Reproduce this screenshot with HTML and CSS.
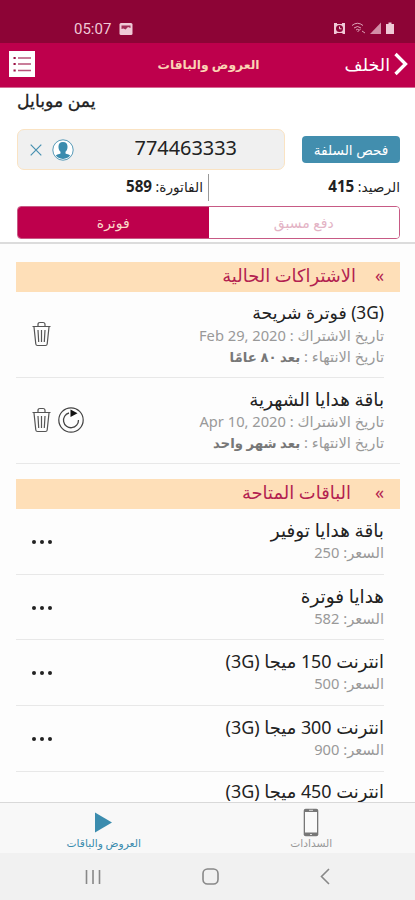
FILE: index.html
```html
<!DOCTYPE html>
<html lang="ar" dir="rtl">
<head>
  <meta charset="UTF-8">
  <meta name="viewport" content="width=device-width, initial-scale=1.0">
  <title>العروض والباقات</title>
  <link rel="stylesheet" href="styles.css">
</head>
<body>
  <div class="status-bar" dir="ltr">
    <span class="clock">05:07</span>
    <svg class="status-photo" width="14" height="12" viewBox="0 0 14 12"><rect x="0.5" width="13" height="12" rx="1.5" fill="#f0c9d6"/><path d="M2.500 6V2.500h9V5L9 4 6.500 6.500l-2-1z" fill="#8d0436" opacity="0.800"/></svg>
    <svg class="status-icons" width="62" height="13" viewBox="0 0 62 13">
      <g fill="#f0c9d6">
        <path d="M1 1h3v1h5V1h3v11h-2l-1-1H4l-1 1H1z"/>
        <path d="M48 0.500V12H37z" opacity="0.700"/>
        <path d="M54 2h1.500V0.500h3V2H61v10h-8V2z"/>
      </g>
      <circle cx="6.500" cy="6.500" r="3.500" fill="#8d0436"/>
      <path d="M6.500 4.500v2.300h2" fill="none" stroke="#f0c9d6"/>
      <path d="M19 3.500q5.500-4.500 11 0M21 6q3.500-3 7 0M23 8q1.500-1.500 3 0M24.500 10l3-3M29 9l3 2" fill="none" stroke="#f0c9d6" opacity="0.800"/>
    </svg>
  </div>

  <header class="header">
    <a class="back">
      <svg width="14" height="24" viewBox="0 0 14 24"><path d="M1.500 2l10 10-10 10" fill="none" stroke="#fff" stroke-width="3.300"/></svg>
      <span>الخلف</span>
    </a>
    <h1>العروض والباقات</h1>
    <svg class="menu" width="26" height="26" viewBox="0 0 26 26"><rect width="26" height="26" fill="#fff"/><path d="M9 7h13M9 13h13M9 19.500h13" stroke="#b8547a" stroke-width="1.300"/><path d="M4.500 7h2.200M4.500 13h2.200M4.500 19.500h2.200" stroke="#9c1145" stroke-width="2"/></svg>
  </header>

  <section class="account">
    <h2>يمن موبايل</h2>
    <div class="number-row">
      <button class="check-btn">فحص السلفة</button>
      <div class="number-box">
        <span class="number">774463333</span>
        <svg width="22" height="22" viewBox="0 0 22 22"><circle cx="11" cy="11" r="10.200" fill="#fff" stroke="#4690b0" stroke-width="0.900"/><path d="M11 3c3.300 0 4.700 2.300 4.500 5.300-.1 2-.9 3.500-2 4.500v1.800c1.500.6 3.300.8 4.700 2A9.500 9.500 0 0 1 3.800 16.600c1.400-1.200 3.200-1.400 4.700-2v-1.800c-1.100-1-1.900-2.500-2-4.500C6.300 5.300 7.700 3 11 3z" fill="#3b8cae"/></svg>
        <svg width="12" height="12" viewBox="0 0 12 12"><path d="M.7.7l10.600 10.600M11.300.7L.7 11.300" stroke="#4690b0" stroke-width="1.200"/></svg>
      </div>
    </div>
    <div class="balances">
      <p>الرصيد: <b>415</b></p>
      <p>الفاتورة: <b>589</b></p>
    </div>
    <div class="segments">
      <button>دفع مسبق</button>
      <button class="active">فوترة</button>
    </div>
  </section>

  <main class="content">
    <h3 class="section-title"><span class="arrows">»</span><span>الاشتراكات الحالية</span></h3>
    <article class="row subscription">
      <div>
        <h4 class="sim">(3G) فوترة شريحة</h4>
        <p>تاريخ الاشتراك : <bdi>Feb 29, 2020</bdi></p>
        <p>تاريخ الانتهاء : <b>بعد ٨٠ عامًا</b></p>
      </div>
      <div class="actions">
        <svg width="19" height="26" viewBox="0 0 19 26"><path d="M.5 5.500h18M2 6l1.800 17q.2 1.500 1.700 1.500h8q1.500 0 1.700-1.500L17 6M6 5V3.500q0-2 2-2h3q2 0 2 2V5M6 9l.7 12M9.500 9v12M13 9l-.7 12" fill="none" stroke="#555" stroke-width="1.200"/></svg>
      </div>
    </article>
    <article class="row subscription last">
      <div>
        <h4>باقة هدايا الشهرية</h4>
        <p>تاريخ الاشتراك : <bdi>Apr 10, 2020</bdi></p>
        <p>تاريخ الانتهاء : <b>بعد شهر واحد</b></p>
      </div>
      <div class="actions">
        <svg width="26" height="26" viewBox="0 0 26 26"><circle cx="13" cy="13" r="12.200" fill="none" stroke="#444" stroke-width="1.200"/><path d="M11 6A7.500 7.500 0 1 0 20.500 13" fill="none" stroke="#444" stroke-width="1.300"/><path d="M12.500 2.500v7.500l7-3.700z" fill="#111"/></svg>
        <svg width="19" height="26" viewBox="0 0 19 26"><path d="M.5 5.500h18M2 6l1.800 17q.2 1.500 1.700 1.500h8q1.500 0 1.700-1.500L17 6M6 5V3.500q0-2 2-2h3q2 0 2 2V5M6 9l.7 12M9.500 9v12M13 9l-.7 12" fill="none" stroke="#555" stroke-width="1.200"/></svg>
      </div>
    </article>

    <h3 class="section-title available"><span class="arrows">»</span><span>الباقات المتاحة</span></h3>
    <article class="row">
      <div><h4>باقة هدايا توفير</h4><p>السعر: 250</p></div>
      <div class="dots"><i></i><i></i><i></i></div>
    </article>
    <article class="row">
      <div><h4>هدايا فوترة</h4><p>السعر: 582</p></div>
      <div class="dots"><i></i><i></i><i></i></div>
    </article>
    <article class="row">
      <div><h4 class="net">انترنت 150 ميجا (3G)</h4><p>السعر: 500</p></div>
      <div class="dots"><i></i><i></i><i></i></div>
    </article>
    <article class="row">
      <div><h4 class="net">انترنت 300 ميجا (3G)</h4><p>السعر: 900</p></div>
      <div class="dots"><i></i><i></i><i></i></div>
    </article>
    <article class="row partial">
      <div><h4 class="net">انترنت 450 ميجا (3G)</h4></div>
    </article>
  </main>

  <nav class="tabs">
    <a>
      <svg width="16" height="29" viewBox="0 0 16 29"><rect x=".7" y=".7" width="14.600" height="27.600" rx="2" fill="#777"/><path d="M2 4h12v20.500H2z" fill="#fafafa"/><path d="M6 2.300h4M7 26.500h2" stroke="#ddd"/></svg>
      <span>السدادات</span>
    </a>
    <a class="active">
      <svg width="17" height="29" viewBox="0 0 17 29"><path d="M0 4.500l17 10-17 10z" fill="#3b8cae"/></svg>
      <span>العروض والباقات</span>
    </a>
  </nav>
  <div class="system-nav" dir="ltr">
    <svg width="16" height="16" viewBox="0 0 16 16"><path d="M1.500 1v14M8 1v14M14.500 1v14" stroke="#888" stroke-width="1.600"/></svg>
    <svg width="17" height="17" viewBox="0 0 17 17"><rect x="1" y="1" width="15" height="15" rx="4.500" fill="none" stroke="#888" stroke-width="1.600"/></svg>
    <svg width="10" height="17" viewBox="0 0 10 17"><path d="M9 1L1.500 8.500 9 16" fill="none" stroke="#888" stroke-width="1.600"/></svg>
  </div>
</body>
</html>
```
FILE: styles.css
```css
* {
  box-sizing: border-box;
}

body {
  margin: 0;
  height: 900px;
  overflow: hidden;
  display: flex;
  flex-direction: column;
  background: #fdfdfd;
  color: #222;
  font-family: "Noto Sans", "DejaVu Sans", sans-serif;
}

h1, h2, h3, h4, p {
  margin: 0;
  font-weight: normal;
  white-space: nowrap;
}

svg {
  display: block;
  flex: none;
}

button {
  font-family: inherit;
  border: none;
  padding: 0;
}

/* Top bars */
.status-bar {
  height: 43px;
  flex: none;
  padding: 14px 20px 0 74px;
  display: flex;
  align-items: center;
  background: #8d0436;
  color: #f0c9d6;
}

.clock {
  font: 15px Roboto, sans-serif;
  width: 45px;
}

.status-icons {
  margin-left: auto;
}

.header {
  height: 45px;
  flex: none;
  padding: 0 7px 2px 9px;
  display: grid;
  grid-template-columns: 1fr auto 1fr;
  align-items: center;
  background: #be004c;
  border-bottom: 1px solid #d66a94;
}

.back {
  display: flex;
  align-items: center;
  gap: 4px;
  color: #fff;
  font-size: 17.500px;
}

.header h1 {
  color: #fbd3b4;
  font-size: 12.300px;
  font-weight: bold;
}

.menu {
  justify-self: end;
}

/* Account panel */
.account {
  height: 156px;
  flex: none;
  padding: 0 15px 0 17px;
  background: #fff;
  border-bottom: 2px solid #dcdcdc;
}

.account h2 {
  height: 41px;
  line-height: 26px;
  text-align: left;
  font-size: 17.300px;
  -webkit-text-stroke: 0.3px #222;
}

.number-row {
  display: flex;
  justify-content: space-between;
  align-items: center;
}

.check-btn {
  width: 98px;
  height: 27px;
  border-radius: 4px;
  background: #428eae;
  color: #fff;
  font-size: 13.700px;
  line-height: 25px;
}

.number-box {
  width: 268px;
  height: 41px;
  padding: 0 47px 0 12px;
  display: flex;
  align-items: center;
  gap: 10px;
  background: #f0f0f0;
  border: 1px solid #fae3c3;
  border-radius: 7px;
}

.number {
  margin-left: auto;
  font-size: 19.900px;
  line-height: 36px;
  padding-bottom: 3px;
}

.balances {
  display: grid;
  grid-template-columns: 191px 1fr;
  height: 27px;
  margin: 4px 0 5px;
  font-size: 13.700px;
  line-height: 24px;
}

.balances b {
  font-size: 15.200px;
}

.balances p + p {
  border-right: 1px solid #999;
  padding-right: 5px;
}

.segments {
  display: grid;
  grid-template-columns: 1fr 1fr;
  height: 33px;
  border: 1px solid #c75a85;
  border-radius: 4px;
  overflow: hidden;
}

.segments button {
  background: #fff;
  color: #e3b3c5;
  font-size: 14px;
}

.segments .active {
  background: #be004c;
  color: #fbd9c8;
}

/* Lists */
.content {
  flex: 1;
  min-height: 0;
  overflow: hidden;
  padding: 18px 15px 0 16px;
}

.section-title {
  height: 30px;
  padding: 0 16px 4px 0;
  display: flex;
  align-items: center;
  background: #fedfb8;
  color: #b31f50;
  font-size: 17.900px;
}

.section-title.available {
  margin-top: 15px;
}

.arrows {
  width: 28px;
}

.available .arrows {
  width: 33px;
}

.row {
  height: 65.700px;
  margin-right: 16px;
  padding-top: 9px;
  display: flex;
  justify-content: space-between;
  border-bottom: 1px solid #e8e8e8;
}

.row h4 {
  height: 24px;
  line-height: 24px;
  font-size: 18.400px;
}

.row .sim {
  font-size: 17.300px;
}

.row .net {
  font-size: 17.900px;
}

.row p {
  height: 20.500px;
  line-height: 20px;
  color: #999;
  font-size: 14.700px;
}

.row p b {
  color: #777;
  font-size: 13.300px;
}

.row.subscription {
  height: 86px;
  padding-top: 9px;
}

.row.partial {
  padding-top: 7px;
}

.subscription.last {
  margin-right: 0;
  padding-right: 16px;
}

.actions {
  display: flex;
  gap: 7px;
  padding: 20px 0 0 16px;
}

.dots {
  display: flex;
  gap: 4px;
  padding: 22px 0 0 16px;
}

.dots i {
  width: 4px;
  height: 4px;
  border-radius: 50%;
  background: #222;
}

/* Bottom bars */
.tabs {
  height: 51px;
  flex: none;
  display: grid;
  grid-template-columns: 1fr 1fr;
  background: #f8f8f8;
  border-top: 1px solid #d9d9d9;
}

.tabs a {
  display: flex;
  flex-direction: column;
  align-items: center;
  padding-top: 5px;
  color: #999;
  font-size: 10.700px;
  line-height: 13px;
}

.tabs .active {
  color: #3b8cae;
}

.system-nav {
  height: 47px;
  flex: none;
  padding: 0 85px 0 85px;
  display: flex;
  align-items: center;
  justify-content: space-between;
  background: #f1f1f1;
}
```
